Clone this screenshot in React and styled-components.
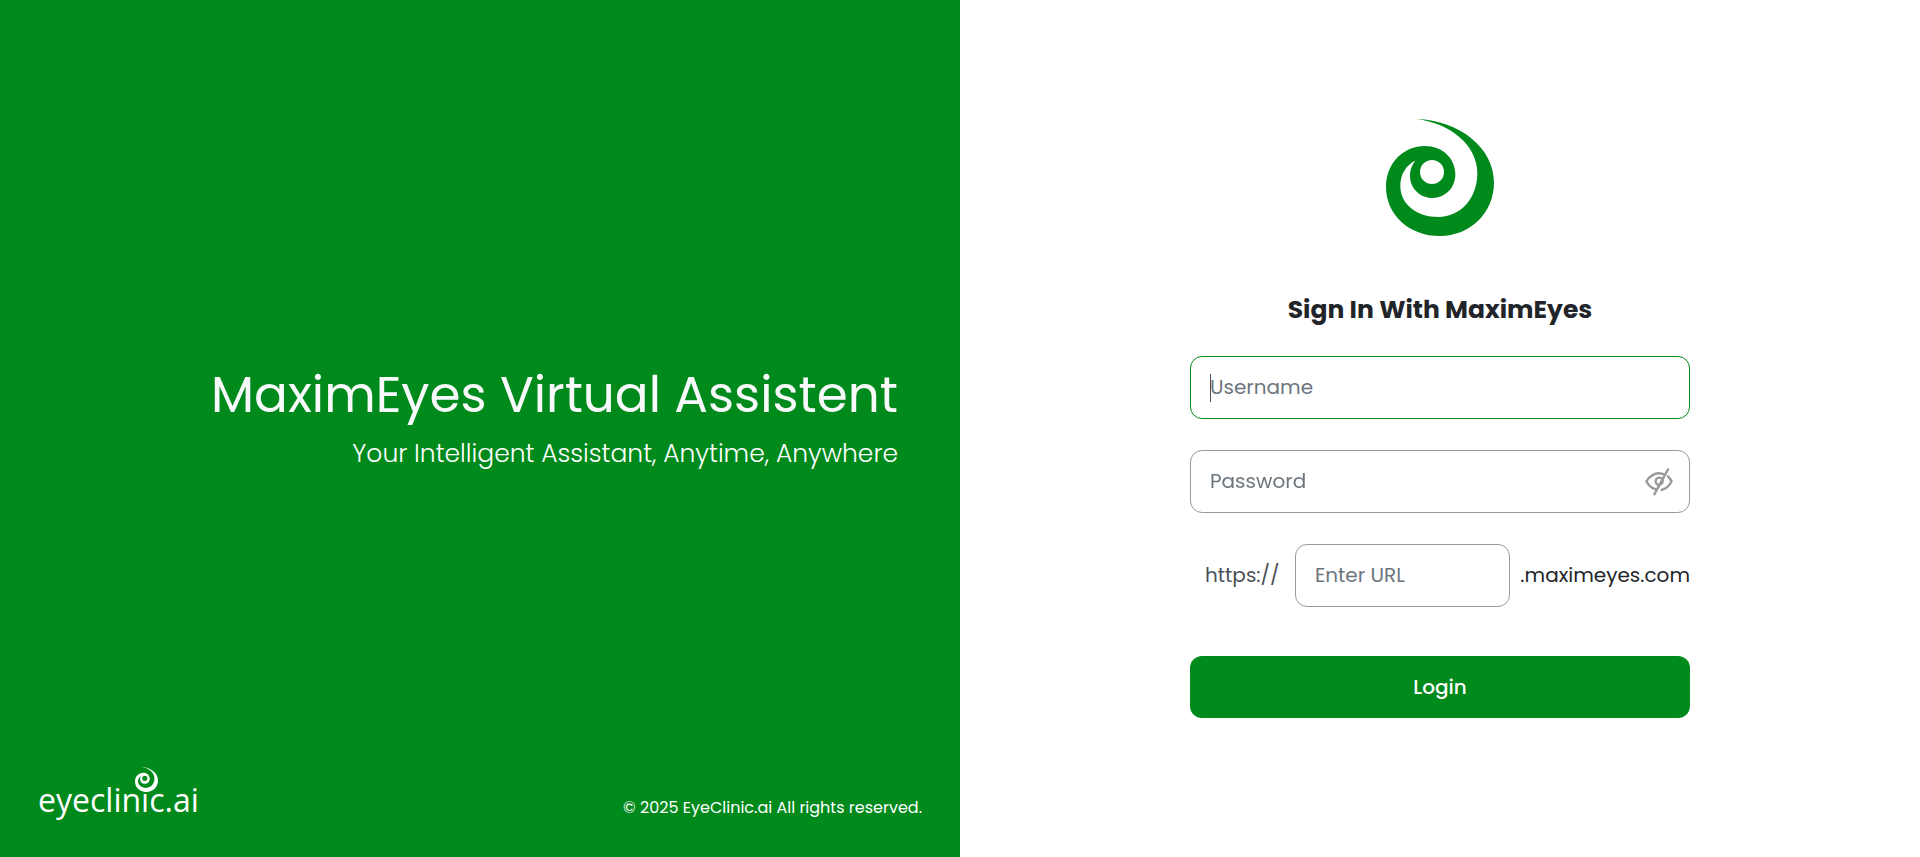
import React, { useState } from "react";
import styled, { createGlobalStyle } from "styled-components";

const green = "#008a1c";

const GlobalStyle = createGlobalStyle`
  *, *::before, *::after { box-sizing: border-box; }
  body {
    margin: 0;
    background: #fff;
    color: #212529;
    font-family: Poppins, Inter, "Open Sans", sans-serif;
  }
  h1, h2, p { margin: 0; }
`;

const Page = styled.div`
  display: grid;
  grid-template-columns: 1fr 1fr;
  min-height: 100vh;
`;

const BrandPanel = styled.section`
  display: grid;
  grid-template-rows: 1fr auto 1fr;
  padding: 0 38px;
  background: ${green};
  color: #fff;
`;

const Hero = styled.div`
  grid-row: 2;
  padding: 0 24px 18px 0;
  text-align: right;
`;

const Title = styled.h1`
  color: #f8f9fa;
  font-size: 50px;
  font-weight: 400;
  line-height: 60px;
`;

const Tagline = styled.p`
  margin-top: 9px;
  font-size: 25px;
  font-weight: 300;
  line-height: 40px;
`;

const Footer = styled.footer`
  grid-row: 3;
  align-self: end;
  display: flex;
  align-items: flex-end;
  justify-content: space-between;
  padding-bottom: 37px;
`;

const Wordmark = styled.div`
  position: relative;
  font-family: "Open Sans", "Noto Sans", sans-serif;
  font-size: 32px;
  line-height: 40px;

  svg {
    position: absolute;
    top: -13px;
    left: 97px;
  }
`;

const Copyright = styled.p`
  font-size: 16px;
  font-weight: 400;
  line-height: 24px;
`;

const SignInPanel = styled.main`
  display: flex;
  flex-direction: column;
  align-items: center;
  justify-content: center;
  padding: 0 20px 21px;
`;

const Form = styled.form`
  display: flex;
  flex-direction: column;
  gap: 31px;
  width: 100%;
  max-width: 500px;
`;

const Heading = styled.h2`
  margin: 55px 0 27px;
  font-size: 25px;
  font-weight: 700;
  line-height: 38px;
`;

const Field = styled.div`
  position: relative;
  display: flex;
`;

const Caret = styled.span`
  position: absolute;
  top: 18px;
  left: 20px;
  display: none;
  width: 1px;
  height: 28px;
  background: #495057;
`;

const TextInput = styled.input`
  width: 100%;
  min-width: 0;
  height: 63px;
  padding: 0 ${(p) => (p.$withToggle ? "60px" : "19px")} 0 19px;
  border: 1px solid #999;
  border-radius: 12px;
  outline: none;
  background: #fff;
  color: #495057;
  font: inherit;
  font-size: 20px;

  &::placeholder { color: #6c757d; opacity: 1; }
  &:focus { border-color: ${green}; }
  &:focus:placeholder-shown { caret-color: transparent; }
  &:focus:placeholder-shown + ${Caret} { display: block; }
`;

const ToggleButton = styled.button`
  position: absolute;
  top: 17px;
  right: 16px;
  display: flex;
  padding: 0;
  border: 0;
  background: none;
  cursor: pointer;
`;

const UrlRow = styled.div`
  display: flex;
  align-items: center;
  justify-content: space-between;
  padding-left: 15px;
  font-size: 20px;
`;

const UrlPrefix = styled.label`
  width: 90px;
  color: #495057;
`;

const UrlField = styled.div`
  flex: 1;
  min-width: 0;
  margin-right: 10px;
`;

const LoginButton = styled.button`
  height: 62px;
  margin-top: 18px;
  border: 0;
  border-radius: 12px;
  background: ${green};
  color: #fff;
  font: inherit;
  font-size: 20px;
  font-weight: 500;
  cursor: pointer;
`;

function Swirl({ width, height, color }) {
  return (
    <svg width={width} height={height} viewBox="48 42 324 351" fill={color} aria-hidden="true">
      <path
        fillRule="evenodd"
        d="M140 42C270 46 372 130 372 232C372 325 300 393 210 393C118 393 48 330 48 245C48 175 100 123 165 123C217 123 256 160 256 208C256 250 225 279 187 279C150 279 120 250 120 213C120 193 126 180 136 167C108 180 91 208 91 243C91 297 140 336 205 336C272 336 322 280 322 205C322 120 240 55 140 42ZM186 165A36 36 0 1 0 186 237A36 36 0 1 0 186 165Z"
      />
    </svg>
  );
}

function EyeOff() {
  return (
    <svg width="30" height="30" viewBox="72 80 90 90" fill="none" stroke="#999" strokeWidth="7" strokeLinecap="round" strokeLinejoin="round" aria-hidden="true">
      <path d="M144 87L103 162" />
      <path d="M130 101C107 94 91 105 79 123C86 135 95 144 108 147" />
      <path d="M144 108C149 113 152 118 155 123C148 137 138 146 125 149" />
      <path d="M123 113C114 109 107 115 107 123C107 128 109 131 113 133" />
      <path d="M128 119C129 126 126 130 121 132" />
    </svg>
  );
}

export default function App() {
  const [visible, setVisible] = useState(false);
  return (
    <>
      <GlobalStyle />
      <Page>
        <BrandPanel>
          <Hero>
            <Title>MaximEyes Virtual Assistent</Title>
            <Tagline>Your Intelligent Assistant, Anytime, Anywhere</Tagline>
          </Hero>
          <Footer>
            <Wordmark>
              eyeclinic.ai
              <Swirl width={23} height={25} color="#fff" />
            </Wordmark>
            <Copyright>© 2025 EyeClinic.ai All rights reserved.</Copyright>
          </Footer>
        </BrandPanel>
        <SignInPanel>
          <Swirl width={108} height={117} color={green} />
          <Heading>Sign In With MaximEyes</Heading>
          <Form onSubmit={(e) => e.preventDefault()}>
            <Field>
              <TextInput type="text" placeholder="Username" aria-label="Username" autoFocus />
              <Caret />
            </Field>
            <Field>
              <TextInput
                type={visible ? "text" : "password"}
                placeholder="Password"
                aria-label="Password"
                $withToggle
              />
              <ToggleButton type="button" aria-label="Show password" onClick={() => setVisible(!visible)}>
                <EyeOff />
              </ToggleButton>
            </Field>
            <UrlRow>
              <UrlPrefix htmlFor="site-url">https://</UrlPrefix>
              <UrlField>
                <TextInput id="site-url" type="text" placeholder="Enter URL" />
              </UrlField>
              <span>.maximeyes.com</span>
            </UrlRow>
            <LoginButton type="submit">Login</LoginButton>
          </Form>
        </SignInPanel>
      </Page>
    </>
  );
}
